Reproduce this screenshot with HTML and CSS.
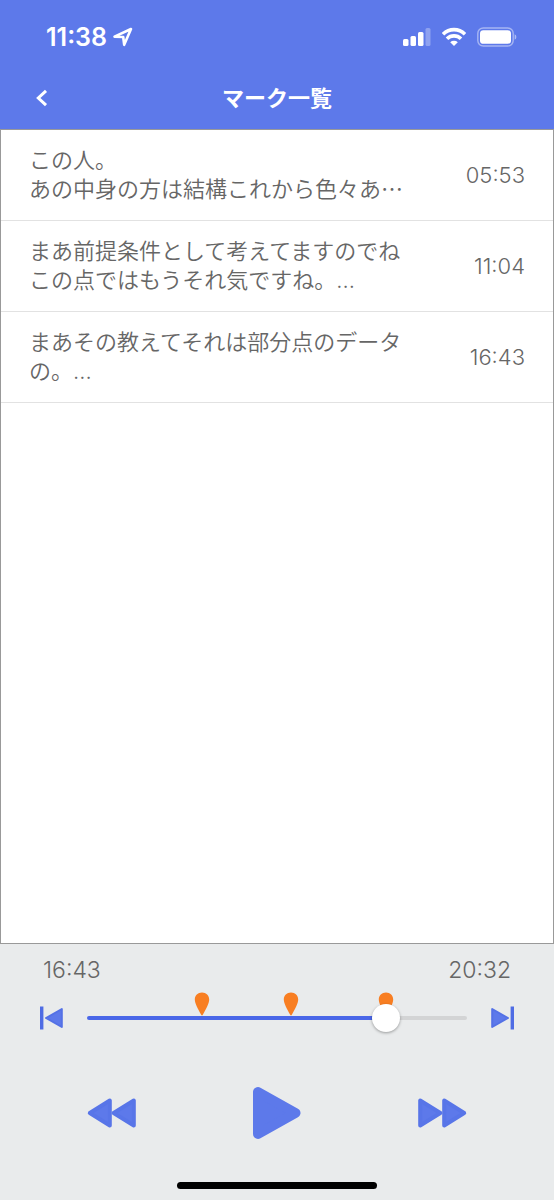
FILE: index.html
```html
<!DOCTYPE html>
<html lang="ja">
<head>
<meta charset="utf-8">
<meta name="viewport" content="width=device-width, initial-scale=1">
<title>マーク一覧</title>
<link rel="stylesheet" href="styles.css">
</head>
<body class="app">
<header class="header">
  <div class="status">
    <div class="status-left">
      <span class="clock">11:38</span>
      <svg width="20" height="20" viewBox="0 0 20 20" aria-hidden="true"><path d="M1.5 9.6 18 2 11.2 17.8 10.2 10Z" fill="none" stroke="#fff" stroke-width="2.6" stroke-linejoin="round"/></svg>
    </div>
    <div class="status-right">
      <svg width="28" height="20" viewBox="0 0 28 20" aria-hidden="true"><g fill="#fff"><rect x="0" y="12" width="5.5" height="7" rx="1.5"/><rect x="7.500" y="9" width="5.5" height="10" rx="1.5"/><rect x="15" y="5" width="5.5" height="14" rx="1.5"/><rect x="22.500" y="1" width="5" height="18" rx="1.5" opacity=".3"/></g></svg>
      <svg width="24" height="20" viewBox="0 0 24 20" aria-hidden="true"><g fill="none" stroke="#fff" stroke-width="3.6"><path d="M1 7.2A15.600 15.600 0 0 1 23 7.2"/><path d="M5 11.700A10 10 0 0 1 19 11.700"/></g><path d="M8.2 15.200A5.6 5.6 0 0 1 15.800 15.200L12 19Z" fill="#fff"/></svg>
      <svg width="40" height="20" viewBox="0 0 40 20" aria-hidden="true"><rect x=".8" y="1" width="35.400" height="18" rx="5.5" fill="none" stroke="#fff" stroke-width="1.4" opacity=".45"/><rect x="3" y="3.2" width="31" height="13.600" rx="3.4" fill="#fff"/><path d="M37.600 7.2Q39.400 8 39.400 10T37.600 12.800Z" fill="#fff" opacity=".5"/></svg>
    </div>
  </div>
  <div class="nav">
    <button class="icon-button" type="button" aria-label="戻る"><svg width="12" height="18" viewBox="0 0 12 18"><path d="M10 1.8 2.3 9 10 16.200" fill="none" stroke="#fff" stroke-width="3"/></svg></button>
    <h1 class="title">マーク一覧</h1>
  </div>
</header>
<main class="panel">
  <ul class="marks">
    <li class="mark"><p class="mark-text">この人。<br>あの中身の方は結構これから色々あ<span class="ellipsis">…</span></p><time class="mark-time">05:53</time></li>
    <li class="mark"><p class="mark-text">まあ前提条件として考えてますのでね<br>この点ではもうそれ気ですね。...</p><time class="mark-time">11:04</time></li>
    <li class="mark"><p class="mark-text">まあその教えてそれは部分点のデータ<br>の。...</p><time class="mark-time">16:43</time></li>
  </ul>
</main>
<footer class="player">
  <div class="times"><span>16:43</span><span>20:32</span></div>
  <div class="seek">
    <button class="icon-button" type="button" aria-label="前のマーク"><svg width="24" height="24" viewBox="0 0 24 24"><path d="M0 .5H3.4V23.500H0Z" fill="#4f6ce4"/><path d="M6 12 21.800 3V21Z" fill="#5d79ea" stroke="#5471e6" stroke-width="2" stroke-linejoin="round"/></svg></button>
    <div class="slider">
      <div class="pins" aria-hidden="true">
        <svg class="pin" style="left:28.65%" viewBox="0 0 16 24"><path d="M8 .5C12.200.5 15.200 3.500 15.200 7.500 15.200 11.500 12 17 8.800 22.800Q8 24 7.200 22.800C4 17 .8 11.500.8 7.500.8 3.500 3.800.5 8 .5Z" fill="#f87e22"/></svg>
        <svg class="pin" style="left:53.9%" viewBox="0 0 16 24"><path d="M8 .5C12.200.5 15.200 3.500 15.200 7.500 15.200 11.500 12 17 8.800 22.800Q8 24 7.200 22.800C4 17 .8 11.500.8 7.500.8 3.500 3.800.5 8 .5Z" fill="#f87e22"/></svg>
        <svg class="pin" style="left:81%" viewBox="0 0 16 24"><path d="M8 .5C12.200.5 15.200 3.500 15.200 7.500 15.200 11.500 12 17 8.800 22.800Q8 24 7.200 22.800C4 17 .8 11.500.8 7.500.8 3.500 3.800.5 8 .5Z" fill="#f87e22"/></svg>
      </div>
      <input class="range" type="range" min="0" max="1232" value="998" aria-label="再生位置" style="--played:81%">
    </div>
    <button class="icon-button" type="button" aria-label="次のマーク"><svg width="24" height="24" viewBox="0 0 24 24"><path d="M20.600.5H24V23.500H20.600Z" fill="#4f6ce4"/><path d="M18 12 2.200 3V21Z" fill="#5d79ea" stroke="#5471e6" stroke-width="2" stroke-linejoin="round"/></svg></button>
  </div>
  <div class="controls">
    <button class="icon-button" type="button" aria-label="巻き戻し"><svg width="50" height="32" viewBox="0 0 50 32"><g fill="#5d79ea" stroke="#5875e8" stroke-width="4" stroke-linejoin="round"><path d="M2.800 16 22.800 3.500V28.500Z"/><path d="M26.600 16 46.800 3.500V28.500Z"/></g></svg></button>
    <button class="icon-button" type="button" aria-label="再生"><svg width="50" height="54" viewBox="0 0 50 54"><path d="M6 6V48L43.500 27Z" fill="#5d79ea" stroke="#5d79ea" stroke-width="10" stroke-linejoin="round"/></svg></button>
    <button class="icon-button" type="button" aria-label="早送り"><svg width="50" height="32" viewBox="0 0 50 32"><g fill="#5d79ea" stroke="#5875e8" stroke-width="4" stroke-linejoin="round"><path d="M23.400 16 3.200 3.500V28.500Z"/><path d="M47.200 16 27.200 3.500V28.500Z"/></g></svg></button>
  </div>
  <div class="home-bar"></div>
</footer>
</body>
</html>
```
FILE: styles.css
```css
* { box-sizing: border-box; }

.app {
  margin: 0;
  min-height: 100vh;
  display: flex;
  flex-direction: column;
  background: #e9ebec;
  color: #666;
  font-family: Inter, "Noto Sans CJK JP", sans-serif;
  font-size: 22px;
}

.header {
  background: #5d79ea;
  color: #fff;
}

.status {
  display: flex;
  justify-content: space-between;
  align-items: center;
  height: 66px;
  padding: 8px 37px 0 46px;
}

.status-left,
.status-right {
  display: flex;
  align-items: center;
}

.status-left { gap: 6px; }
.status-right { gap: 11px; }

.clock {
  font-size: 25px;
  font-weight: 600;
}

.nav {
  display: grid;
  grid-template-columns: 36px 1fr 36px;
  align-items: center;
  height: 63px;
  padding: 0 24px;
}

.title {
  margin: 0;
  font-size: 22px;
  font-weight: 700;
  line-height: 32px;
  text-align: center;
}

.icon-button {
  display: grid;
  place-items: center;
  padding: 0;
  border: 0;
  background: none;
  cursor: pointer;
}

.icon-button svg { display: block; }

.panel {
  flex: 1;
  border: 1px solid #999;
  background: #fff;
}

.marks {
  margin: 0;
  padding: 0;
  list-style: none;
}

.mark {
  display: flex;
  justify-content: space-between;
  align-items: center;
  padding: 16px 28px;
  border-bottom: 1px solid #e2e2e2;
}

.mark-text {
  margin: 0;
  font-weight: 350;
  line-height: 29px;
}

.ellipsis {
  font-family: "Noto Sans CJK JP", sans-serif;
  line-height: 1;
}

.mark-time {
  font-size: 22px;
  font-weight: 350;
}

.player {
  display: flex;
  flex-direction: column;
  padding-bottom: 11px;
}

.times {
  display: flex;
  justify-content: space-between;
  padding: 11px 43px 0;
  font-size: 23px;
  font-weight: 350;
  line-height: 30px;
}

.seek {
  display: grid;
  grid-template-columns: 24px 1fr 24px;
  gap: 23px;
  align-items: center;
  height: 66px;
  padding: 0 40px;
}

.slider { position: relative; }

.pins {
  position: absolute;
  inset: 0 14px;
}

.pin {
  position: absolute;
  bottom: 16px;
  width: 16px;
  height: 24px;
  margin-left: -8px;
}

.range {
  position: relative;
  display: block;
  width: 100%;
  height: 28px;
  margin: 0;
  appearance: none;
  background: none;
}

.range::-webkit-slider-runnable-track {
  height: 4px;
  border-radius: 2px;
  background: linear-gradient(to right, #4a67e8 var(--played), #d3d4d5 var(--played));
}

.range::-webkit-slider-thumb {
  appearance: none;
  width: 28px;
  height: 28px;
  margin-top: -12px;
  border-radius: 50%;
  background: #fff;
  box-shadow: 0 1px 3px rgb(0 0 0 / 35%);
}

.controls {
  display: flex;
  justify-content: space-between;
  align-items: center;
  height: 124px;
  padding: 0 87px;
}

.home-bar {
  align-self: center;
  width: 36%;
  height: 7px;
  margin-top: 7px;
  border-radius: 4px;
  background: #000;
}
```
